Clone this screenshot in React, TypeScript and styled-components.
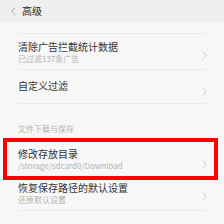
import React from "react";
import styled, { createGlobalStyle } from "styled-components";

const Global = createGlobalStyle`
  html, body {
    margin: 0;
    padding: 0;
    background: #f7f7f7;
  }
  body {
    font-family: "Noto Sans CJK SC", "Noto Sans", sans-serif;
    width: 224px;
    height: 224px;
    overflow: hidden;
  }
`;

const Header = styled.div`
  height: 22px;
  background: #efefef;
  display: flex;
  align-items: center;
  padding-left: 11px;
  gap: 6px;
`;

const Title = styled.span`
  font-size: 10px;
  line-height: 12px;
  color: #262626;
`;

const List = styled.div`
  margin-top: 11px;
  border-top: 1px solid #ebebeb;
  margin-left: 18px;
  margin-right: 17px;
`;

const Row = styled.div<{ $h: number; $top: number; $last?: boolean }>`
  position: relative;
  display: flex;
  height: ${(p) => p.$h}px;
  box-sizing: border-box;
  padding-top: ${(p) => p.$top}px;
  border-bottom: ${(p) => (p.$last ? "none" : "1px solid #ebebeb")};
`;

const Boxed = styled(Row)`
  &::after {
    content: "";
    position: absolute;
    left: -15px;
    right: -11px;
    top: 0;
    bottom: 0;
    border: 4px solid #ff0000;
  }
`;

const Text = styled.div`
  flex: 1;
  display: flex;
  flex-direction: column;
  gap: 1px;
`;

const Name = styled.div`
  font-size: 10px;
  line-height: 12px;
  color: #333;
`;

const Sub = styled.div`
  font-size: 8px;
  line-height: 10px;
  color: #b3b3b3;
`;

const Section = styled.div`
  height: 34px;
  box-sizing: border-box;
  padding-top: 20px;
  font-size: 8px;
  line-height: 10px;
  color: #b3b3b3;
`;

const Arrow = styled.svg`
  align-self: center;
  width: 5px;
  height: 9px;
  margin-top: ${(p) => 0}px;
`;

const Chevron = () => (
  <Arrow viewBox="0 0 5 9">
    <path d="M0.7 0.7 L4.3 4.5 L0.7 8.3" fill="none" stroke="#c6c6c6" strokeWidth="0.9" />
  </Arrow>
);

const BackIcon = styled.svg`
  width: 5px;
  height: 9px;
`;

export default function App() {
  return (
    <>
      <Global />
      <Header>
        <BackIcon viewBox="0 0 5 9">
          <path d="M4.3 0.7 L0.8 4.5 L4.3 8.3" fill="none" stroke="#a0a0a0" strokeWidth="0.9" />
        </BackIcon>
        <Title>高级</Title>
      </Header>
      <List>
        <Row $h={36} $top={7}>
          <Text>
            <Name>清除广告拦截统计数据</Name>
            <Sub>已过滤137条广告</Sub>
          </Text>
          <Chevron />
        </Row>
        <Row $h={34} $top={10}>
          <Text>
            <Name>自定义过滤</Name>
          </Text>
          <Chevron />
        </Row>
        <Section>文件下载与保存</Section>
        <Boxed $h={42} $top={10} $last>
          <Text>
            <Name>修改存放目录</Name>
            <Sub>/storage/sdcard0/Download</Sub>
          </Text>
          <Chevron />
        </Boxed>
        <Row $h={31} $top={2}>
          <Text>
            <Name>恢复保存路径的默认设置</Name>
            <Sub>还原默认设置</Sub>
          </Text>
          <Chevron />
        </Row>
      </List>
    </>
  );
}
